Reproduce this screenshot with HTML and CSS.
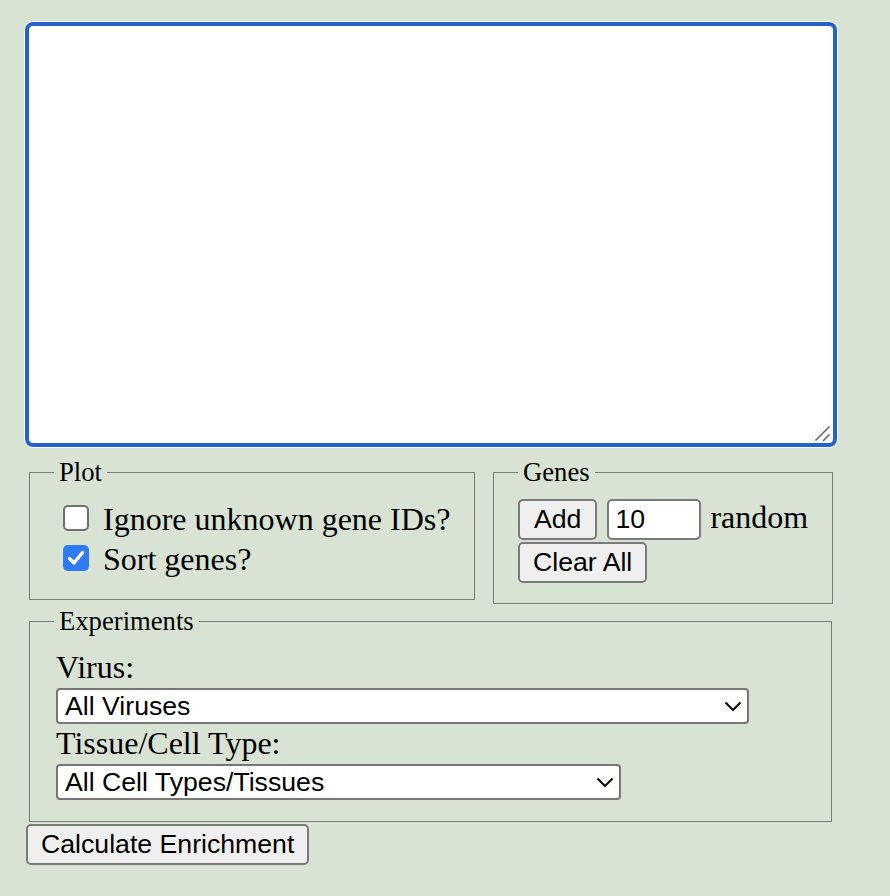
FILE: index.html
```html
<!DOCTYPE html>
<html>
<head>
<meta charset="utf-8">
<link rel="stylesheet" href="styles.css">
</head>
<body>
<div class="page">
  <div class="ta-wrap">
    <textarea class="gene-list"></textarea>
    <svg class="grip" width="18" height="18" viewBox="0 0 18 18"><path d="M1.5 16.5 L15.5 2.5 M9 17 L15.5 10.5" fill="none" stroke="#6a6a6a" stroke-width="1.6"/></svg>
  </div>
  <div class="row">
    <fieldset class="box plot">
      <legend>Plot</legend>
      <label class="check"><span class="cb"></span>Ignore unknown gene IDs?</label>
      <label class="check"><span class="cb cb-on"><svg width="26" height="26" viewBox="0 0 26 26"><path d="M6.5 13.5 L11 18 L19.5 7.5" fill="none" stroke="#fff" stroke-width="3.4" stroke-linecap="round" stroke-linejoin="round"/></svg></span>Sort genes?</label>
    </fieldset>
    <fieldset class="box genes">
      <legend>Genes</legend>
      <div class="add-row">
        <button class="btn add">Add</button>
        <input class="num" type="text" value="10">
        <span class="word">random</span>
      </div>
      <button class="btn clear">Clear All</button>
    </fieldset>
  </div>
  <fieldset class="box experiments">
    <legend>Experiments</legend>
    <label class="field-label">Virus:</label>
    <div class="select-wrap wide">
      <select class="sel"><option>All Viruses</option></select>
      <svg class="chev" width="18" height="11" viewBox="0 0 18 11"><path d="M1.5 1.5 L9 9 L16.5 1.5" fill="none" stroke="#111" stroke-width="2.2"/></svg>
    </div>
    <label class="field-label">Tissue/Cell Type:</label>
    <div class="select-wrap narrow">
      <select class="sel"><option>All Cell Types/Tissues</option></select>
      <svg class="chev" width="18" height="11" viewBox="0 0 18 11"><path d="M1.5 1.5 L9 9 L16.5 1.5" fill="none" stroke="#111" stroke-width="2.2"/></svg>
    </div>
  </fieldset>
  <button class="btn calc">Calculate Enrichment</button>
</div>
</body>
</html>
```
FILE: styles.css
```css
html, body {
  margin: 0;
  background: #d9e3d3;
}
body {
  font-family: "Liberation Serif", "Times New Roman", serif;
  color: #000;
}
.page {
  padding: 22px 0 0 25px;
}
.ta-wrap {
  position: relative;
  width: 812px;
}
.gene-list {
  display: block;
  box-sizing: border-box;
  width: 812px;
  height: 425px;
  margin: 0;
  border: 4px solid #2462c9;
  border-radius: 8px;
  box-shadow: 0 0 0 1px #ffffff;
  background: #fff;
  outline: none;
  resize: none;
}
.grip {
  position: absolute;
  right: 5px;
  bottom: 5px;
}
.row {
  display: flex;
  align-items: flex-start;
  margin: 10px 0 0 4px;
}
.box {
  box-sizing: border-box;
  margin: 0;
  min-width: 0;
  padding: 11px 24px 20px;
  border: 1px solid #7c7c7c;
}
.box legend {
  padding: 0 5px;
  font-size: 26.67px;
  line-height: normal;
}
.plot {
  width: 446px;
}
.genes {
  width: 340px;
  margin-left: 18px;
}
.check {
  display: flex;
  align-items: center;
  height: 40px;
  font-size: 32px;
  white-space: nowrap;
}
.cb {
  box-sizing: border-box;
  flex: none;
  width: 26px;
  height: 26px;
  margin: -2px 14px 0 9px;
  border: 2px solid #707070;
  border-radius: 5px;
  background: #fff;
  display: flex;
}
.cb-on {
  border: none;
  background: #2f7bf5;
}
.add-row {
  display: flex;
  align-items: baseline;
}
.btn {
  box-sizing: border-box;
  height: 41px;
  margin: 0;
  padding: 0 13px;
  border: 2px solid #7a7a7a;
  border-radius: 5px;
  background: #efefef;
  color: #000;
  font-family: "Liberation Sans", Arial, sans-serif;
  font-size: 26.67px;
}
.add {
  padding: 0 14px;
}
.num {
  box-sizing: border-box;
  width: 94px;
  height: 41px;
  margin: 0 0 0 10px;
  padding: 0 6px;
  border: 2px solid #7a7a7a;
  border-radius: 5px;
  background: #fff;
  font-family: "Liberation Sans", Arial, sans-serif;
  font-size: 26.67px;
  color: #000;
}
.word {
  margin-left: 9px;
  font-size: 32px;
}
.clear {
  display: block;
  margin-top: 2px;
}
.experiments {
  width: 803px;
  margin: 2px 0 0 4px;
  padding-bottom: 21px;
}
.field-label {
  display: block;
  font-size: 32px;
  line-height: 38px;
  padding-left: 2px;
}
.select-wrap {
  position: relative;
  margin: 2px 0 0 2px;
}
.wide {
  width: 693px;
}
.narrow {
  width: 565px;
}
.sel {
  display: block;
  box-sizing: border-box;
  width: 100%;
  height: 36px;
  margin: 0;
  padding: 0 30px 0 7px;
  -webkit-appearance: none;
  appearance: none;
  border: 2px solid #767676;
  border-radius: 4px;
  background: #fff;
  color: #000;
  font-family: "Liberation Sans", Arial, sans-serif;
  font-size: 26.67px;
}
.chev {
  position: absolute;
  right: 7px;
  top: 13px;
}
.calc {
  display: block;
  margin: 2px 0 0 1px;
}
```
